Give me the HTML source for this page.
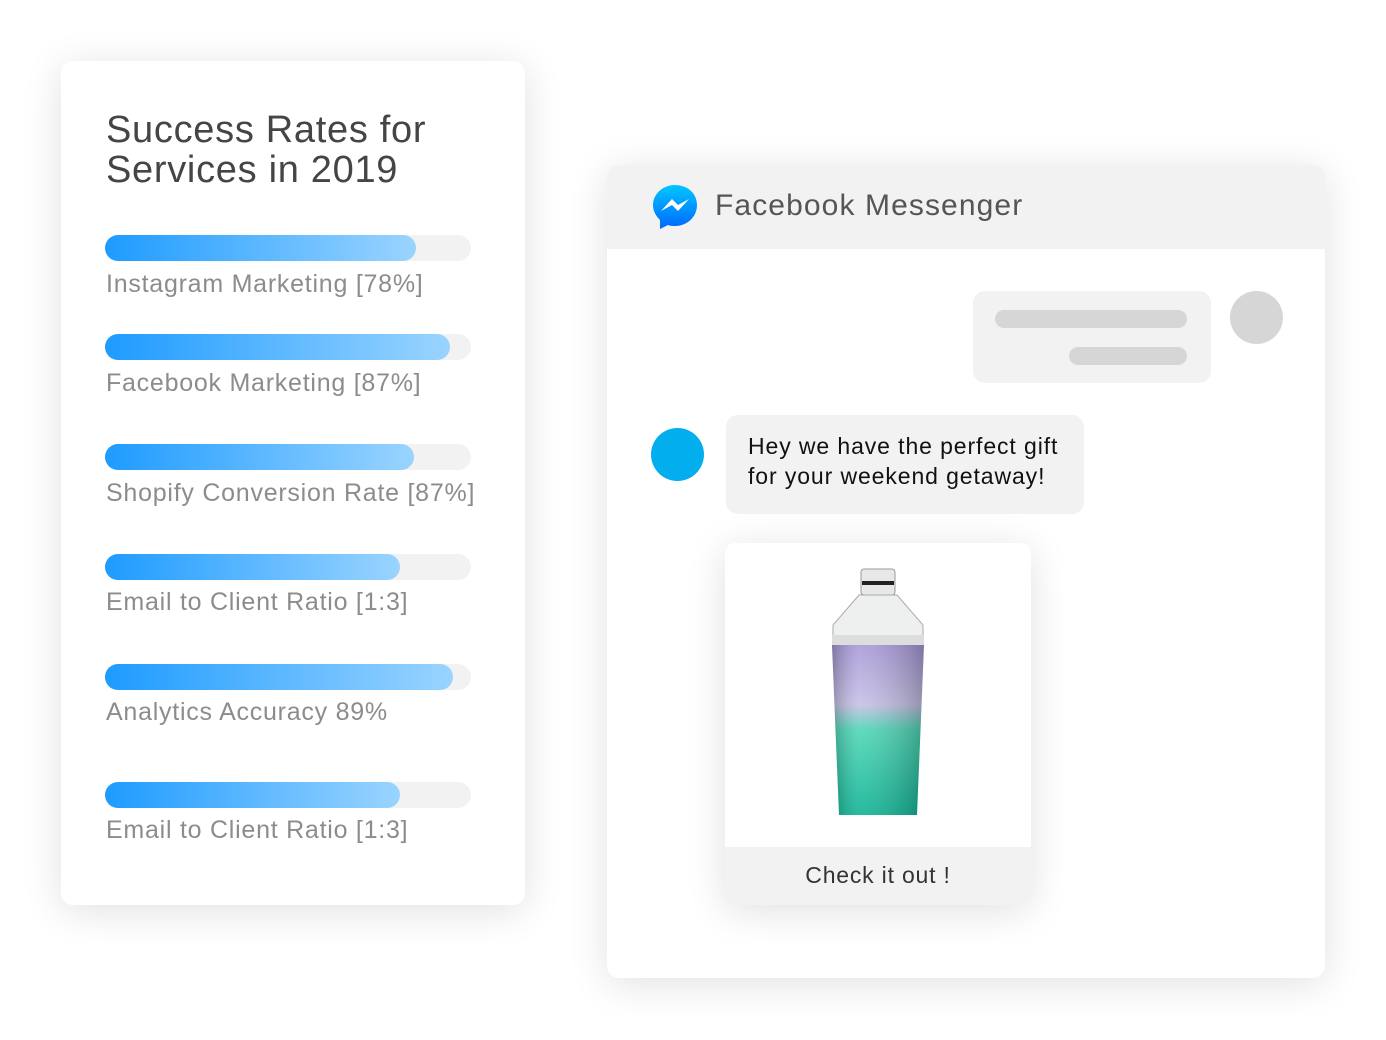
<!DOCTYPE html>
<html><head><style>
*{margin:0;padding:0;box-sizing:border-box}
body{width:1386px;height:1040px;background:#fff;position:relative;overflow:hidden;font-family:"Liberation Sans",sans-serif}
.abs{position:absolute}
.card{position:absolute;background:#fff;border-radius:12px;box-shadow:0 6px 40px rgba(0,0,0,0.12)}
.track{position:absolute;left:105px;width:366px;height:26px;border-radius:13px;background:#f2f2f2}
.fill{position:absolute;left:0;top:0;height:26px;border-radius:13px;background:linear-gradient(90deg,#1e9bff,#9ad4ff)}
.lab{position:absolute;left:106px;font-size:25px;color:#8c8c8c;white-space:nowrap;letter-spacing:0.75px}
</style></head><body>
<div class="card" style="left:61px;top:61px;width:464px;height:844px"></div>
<div class="abs" style="left:106px;top:110px;font-size:38px;line-height:40px;color:#454545;letter-spacing:0.7px">Success Rates for<br>Services in 2019</div>

<div class="track" style="top:235px"><div class="fill" style="width:311px"></div></div>
<div class="lab" style="top:270px">Instagram Marketing [78%]</div>
<div class="track" style="top:334px"><div class="fill" style="width:345px"></div></div>
<div class="lab" style="top:369px">Facebook Marketing [87%]</div>
<div class="track" style="top:444px"><div class="fill" style="width:309px"></div></div>
<div class="lab" style="top:479px">Shopify Conversion Rate [87%]</div>
<div class="track" style="top:554px"><div class="fill" style="width:295px"></div></div>
<div class="lab" style="top:588px">Email to Client Ratio [1:3]</div>
<div class="track" style="top:664px"><div class="fill" style="width:348px"></div></div>
<div class="lab" style="top:698px">Analytics Accuracy 89%</div>
<div class="track" style="top:782px"><div class="fill" style="width:295px"></div></div>
<div class="lab" style="top:816px">Email to Client Ratio [1:3]</div>

<div class="card" style="left:607px;top:165px;width:718px;height:813px;overflow:hidden">
  <div class="abs" style="left:0;top:0;width:718px;height:84px;background:#f2f2f2"></div>
</div>
<svg class="abs" style="left:652px;top:184px" width="46" height="46" viewBox="0 0 46 46">
<defs><linearGradient id="g" x1="0" y1="0" x2="0" y2="1"><stop offset="0" stop-color="#00c6ff"/><stop offset="1" stop-color="#0068ff"/></linearGradient></defs>
<path d="M23 1C11 1 1 10 1 21c0 6 3 11 7 15v9l8-4c2 1 5 1 7 1 12 0 22-9 22-21S35 1 23 1z" fill="url(#g)"/>
<path d="M9 27l11-12 6 6 11-6-11 12-6-6z" fill="#fff"/>
</svg>
<div class="abs" style="left:715px;top:189px;font-size:30px;color:#555;letter-spacing:1.1px">Facebook Messenger</div>

<div class="abs" style="left:973px;top:291px;width:238px;height:92px;border-radius:12px;background:#f2f2f2"></div>
<div class="abs" style="left:995px;top:310px;width:192px;height:18px;border-radius:9px;background:#d6d6d6"></div>
<div class="abs" style="left:1069px;top:347px;width:118px;height:18px;border-radius:9px;background:#d6d6d6"></div>
<div class="abs" style="left:1230px;top:291px;width:53px;height:53px;border-radius:50%;background:#d6d6d6"></div>

<div class="abs" style="left:651px;top:428px;width:53px;height:53px;border-radius:50%;background:#03aeef"></div>
<div class="abs" style="left:726px;top:415px;width:358px;height:99px;border-radius:12px;background:#f2f2f2"></div>
<div class="abs" style="left:748px;top:431px;font-size:23px;line-height:30px;color:#111;letter-spacing:0.9px;white-space:nowrap">Hey we have the perfect gift<br>for your weekend getaway!</div>

<div class="card" style="left:725px;top:543px;width:306px;height:362px;overflow:hidden;border-radius:10px">
  <div class="abs" style="left:0;top:304px;width:306px;height:58px;background:#f2f2f2"></div>
  <div class="abs" style="left:0;top:319px;width:306px;text-align:center;font-size:23px;color:#333;letter-spacing:0.8px">Check it out !</div>
</div>
<svg class="abs" style="left:825px;top:565px" width="106" height="260" viewBox="0 0 106 260">
<defs>
<linearGradient id="b" x1="0" y1="0" x2="0" y2="1"><stop offset="0" stop-color="#a99ad8"/><stop offset="0.35" stop-color="#c6c0e6"/><stop offset="0.5" stop-color="#4fd6b6"/><stop offset="1" stop-color="#0fb394"/></linearGradient>
<linearGradient id="s" x1="0" y1="0" x2="1" y2="0"><stop offset="0" stop-color="#000" stop-opacity=".25"/><stop offset=".3" stop-color="#fff" stop-opacity=".1"/><stop offset="1" stop-color="#000" stop-opacity=".25"/></linearGradient>
</defs>
<rect x="36" y="4" width="34" height="26" rx="3" fill="#e8e8e8" stroke="#999"/>
<rect x="37" y="16" width="32" height="4" fill="#222"/>
<path d="M34 30h38l26 30v14H8V60z" fill="#eef0f0" stroke="#aaa"/>
<rect x="7" y="70" width="92" height="10" fill="#ddd"/>
<path d="M7 80h92l-7 170H14z" fill="url(#b)"/>
<path d="M7 80h92l-7 170H14z" fill="url(#s)"/>
</svg>
</body></html>
